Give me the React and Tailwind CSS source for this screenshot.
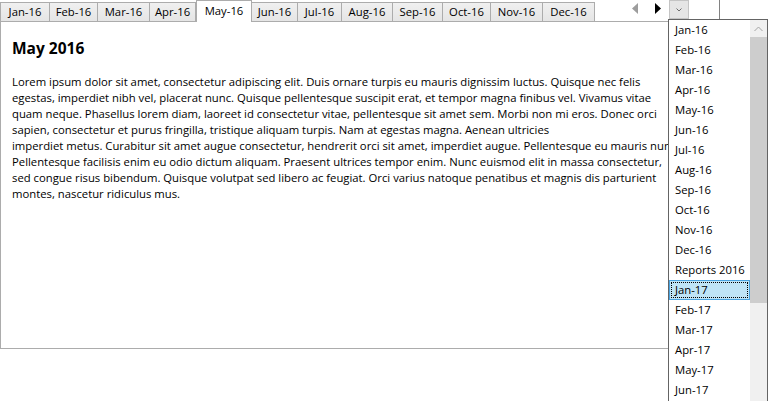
import React from "react";

//data
const tabs = [
  { label: "Jan-16", w: "w-[50px] border-l" },
  { label: "Feb-16", w: "w-[48px]" },
  { label: "Mar-16", w: "w-[52px]" },
  { label: "Apr-16", w: "w-[46px]" },
  { label: "May-16", w: "w-[56px] border-l", selected: true },
  { label: "Jun-16", w: "w-[46px]" },
  { label: "Jul-16", w: "w-[44px]" },
  { label: "Aug-16", w: "w-[51px]" },
  { label: "Sep-16", w: "w-[50px]" },
  { label: "Oct-16", w: "w-[48px]" },
  { label: "Nov-16", w: "w-[52px]" },
  { label: "Dec-16", w: "w-[52px]" },
];

const menuItems = [
  "Jan-16", "Feb-16", "Mar-16", "Apr-16", "May-16", "Jun-16", "Jul-16",
  "Aug-16", "Sep-16", "Oct-16", "Nov-16", "Dec-16", "Reports 2016",
  "Jan-17", "Feb-17", "Mar-17", "Apr-17", "May-17", "Jun-17",
];

const lines = [
  "Lorem ipsum dolor sit amet, consectetur adipiscing elit. Duis ornare turpis eu mauris dignissim luctus. Quisque nec felis",
  "egestas, imperdiet nibh vel, placerat nunc. Quisque pellentesque suscipit erat, et tempor magna finibus vel. Vivamus vitae",
  "quam neque. Phasellus lorem diam, laoreet id consectetur vitae, pellentesque sit amet sem. Morbi non mi eros. Donec orci",
  "sapien, consectetur et purus fringilla, tristique aliquam turpis. Nam at egestas magna. Aenean ultricies",
  "imperdiet metus. Curabitur sit amet augue consectetur, hendrerit orci sit amet, imperdiet augue. Pellentesque eu mauris nunc.",
  "Pellentesque facilisis enim eu odio dictum aliquam. Praesent ultrices tempor enim. Nunc euismod elit in massa consectetur,",
  "sed congue risus bibendum. Quisque volutpat sed libero ac feugiat. Orci varius natoque penatibus et magnis dis parturient",
  "montes, nascetur ridiculus mus.",
];

const Tab = ({ label, w, selected }) =>
  selected ? (
    <div
      className={`${w} self-start h-[22px] border-t border-r border-[#acacac] bg-white flex items-center justify-center pb-[2px] relative z-10`}
    >
      {label}
    </div>
  ) : (
    <div
      className={`${w} h-[19px] border-t border-r border-[#acacac] bg-linear-to-b from-[#f0f0f0] to-[#e5e5e5] flex items-center justify-center`}
    >
      {label}
    </div>
  );

const DropdownList = () => (
  <div className="absolute left-[668px] top-[19px] w-[100px] h-[400px] bg-white border-l border-t border-r border-[#646464] flex z-20">
    <div className="w-[81px] flex flex-col">
      {menuItems.map((item, i) =>
        i === 13 ? (
          <div
            key={item}
            className="h-[20px] leading-[18px] pl-[5px] bg-[#bfe4f6] border border-[#4aa3df] outline outline-1 outline-dotted outline-black -outline-offset-[3px] whitespace-nowrap"
          >
            {item}
          </div>
        ) : (
          <div key={item} className="h-[20px] leading-[20px] pl-[6px] whitespace-nowrap">
            {item}
          </div>
        )
      )}
    </div>
    <div className="w-[17px] bg-[#f0f0f0] flex flex-col">
      <div className="h-[17px] flex items-center justify-center">
        <svg width="9" height="6" viewBox="0 0 9 6">
          <polyline points="0.5,5 4.5,1 8.5,5" fill="none" stroke="#a3a3a3" strokeWidth="1" />
        </svg>
      </div>
      <div className="h-[266px] bg-[#cdcdcd]"></div>
    </div>
  </div>
);

const App = () => {
  return (
    <div
      className="relative w-[768px] h-[401px] overflow-hidden bg-white text-black text-[11.3px] leading-[16px]"
      style={{ fontFamily: '"Open Sans", "Noto Sans", sans-serif' }}
    >
      {/* tab strip */}
      <div className="relative z-10 flex h-[21px] items-end">
        {tabs.map((t) => (
          <Tab key={t.label} {...t} />
        ))}

        <svg className="self-start mt-[3px] ml-[37px]" width="6" height="11" viewBox="0 0 6 11">
          <polygon points="6,0 6,11 0,5.5" fill="#9d9d9d" />
        </svg>
        <svg className="self-start mt-[3px] ml-[17px]" width="6" height="11" viewBox="0 0 6 11">
          <polygon points="0,0 0,11 6,5.5" fill="#000" />
        </svg>

        <div className="self-start ml-[8px] w-[20px] h-[19px] bg-[#e5e5e5] border border-[#c4c4c4] flex items-center justify-center">
          <svg width="6" height="4" viewBox="0 0 6 4">
            <polyline points="0.5,0.5 3,3 5.5,0.5" fill="none" stroke="#6d6d6d" strokeWidth="1" />
          </svg>
        </div>

        <span className="self-start ml-[30px] w-px h-[20px] bg-[#828282]"></span>
      </div>

      {/* page */}
      <div className="w-[740px] h-[328px] border border-[#acacac] pl-[11px] pt-[16px]">
        <div className="w-[656px] overflow-hidden">
          <h1 className="text-[15.5px] leading-[21px] font-bold">May 2016</h1>
          <div className="mt-[15px]">
            {lines.map((l, i) => (
              <p key={i} className="whitespace-nowrap">
                {l}
              </p>
            ))}
          </div>
        </div>
      </div>

      <DropdownList />
    </div>
  );
};

export default App;
